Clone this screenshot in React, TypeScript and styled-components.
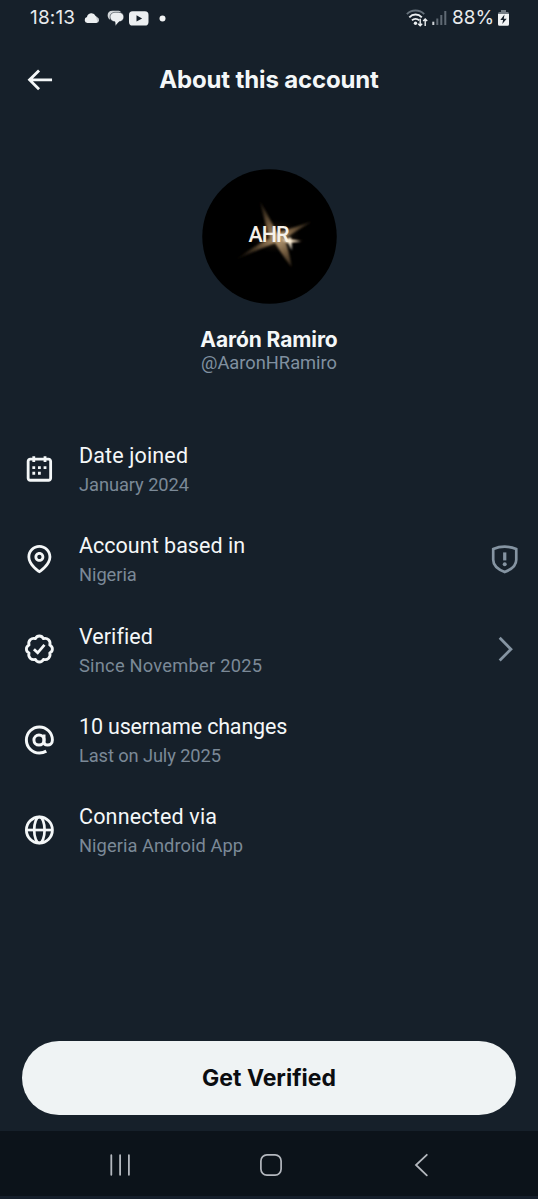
import React from "react";
import styled, { createGlobalStyle } from "styled-components";

const GlobalStyle = createGlobalStyle`
  * { box-sizing: border-box; }
  body { margin: 0; background: #16202a; }
`;

const Screen = styled.div`
  display: flex;
  flex-direction: column;
  height: 1199px;
  background: #16202a;
  color: #f4f7f8;
  font-family: Roboto, "Liberation Sans", sans-serif;
`;

const StatusBar = styled.div`
  display: flex;
  justify-content: space-between;
  align-items: center;
  height: 36px;
  padding: 0 29px 0 30px;
`;

const StatusGroup = styled.div`
  display: flex;
  align-items: center;
`;

const StatusText = styled.span<{ $width: number; $tracking: number; $gap?: number }>`
  width: ${(p) => p.$width}px;
  margin-left: ${(p) => p.$gap ?? 0}px;
  font-family: Inter, sans-serif;
  font-size: 19px;
  line-height: 36px;
  letter-spacing: ${(p) => p.$tracking}px;
  white-space: nowrap;
  color: #e8ebed;
`;

const Icon = styled.svg<{ $gap?: number }>`
  display: block;
  flex: none;
  margin-left: ${(p) => p.$gap ?? 0}px;
`;

const Header = styled.header`
  display: grid;
  grid-template-columns: 34px 1fr 34px;
  align-items: center;
  height: 87px;
  padding: 0 22px;
`;

const HeaderTitle = styled.h1`
  margin: 0;
  text-align: center;
  font: 750 24px/30px Inter, sans-serif;
  letter-spacing: -0.15px;
`;

const Profile = styled.section`
  display: flex;
  flex-direction: column;
  align-items: center;
  height: 301px;
  padding-top: 46px;
`;

const Avatar = styled.svg`
  display: block;
  width: 135px;
  height: 135px;
`;

const Name = styled.div`
  margin-top: 22.5px;
  font: 700 21px/26px Inter, sans-serif;
  letter-spacing: -0.1px;
`;

const Handle = styled.div`
  margin-top: -1px;
  font-size: 18.3px;
  line-height: 22px;
  color: #8090a0;
`;

const DetailList = styled.ul`
  flex: 1;
  margin: 0;
  padding: 0;
  list-style: none;
`;

const DetailRow = styled.li`
  display: flex;
  align-items: center;
  height: 90.2px;
  padding: 0 16px 0 22px;
`;

const DetailText = styled.div`
  flex: 1;
  margin-left: 23px;
  padding-top: 2.4px;
  white-space: nowrap;
`;

const DetailTitle = styled.div<{ $tracking: number }>`
  font-size: 21.5px;
  line-height: 30px;
  letter-spacing: ${(p) => p.$tracking}px;
`;

const DetailNote = styled.div<{ $tracking: number }>`
  font-size: 18.3px;
  line-height: 28px;
  letter-spacing: ${(p) => p.$tracking}px;
  color: #7b8997;
`;

const Footer = styled.div`
  padding: 0 22px 16px;
`;

const PrimaryButton = styled.button`
  display: block;
  width: 494px;
  height: 74px;
  border: 0;
  border-radius: 37px;
  background: #eff3f4;
  color: #0b0d10;
  font: 650 23px/74px Inter, sans-serif;
  padding: 0;
`;

const NavBar = styled.nav`
  display: flex;
  align-items: center;
  justify-content: space-between;
  height: 68px;
  padding: 3px 105px 0 108px;
  background: #0c131a;
  border-bottom: 3px solid #161f2b;
`;

const CalendarIcon = () => (
  <path
    fill="currentColor"
    d="M7 4V3h2v1h6V3h2v1h1.5C19.89 4 21 5.12 21 6.5v12c0 1.38-1.11 2.5-2.5 2.5h-13C4.12 21 3 19.88 3 18.5v-12C3 5.12 4.12 4 5.5 4H7zm0 2H5.5c-.27 0-.5.22-.5.5v12c0 .28.23.5.5.5h13c.28 0 .5-.22.5-.5v-12c0-.28-.22-.5-.5-.5H17v1h-2V6H9v1H7V6zm0 6h2v-2H7v2zm0 4h2v-2H7v2zm4-4h2v-2h-2v2zm0 4h2v-2h-2v2zm4-4h2v-2h-2v2z"
  />
);

const PinIcon = () => (
  <path
    fill="currentColor"
    d="M12 7c-1.93 0-3.5 1.57-3.5 3.5S10.07 14 12 14s3.5-1.57 3.5-3.5S13.93 7 12 7zm0 5c-.827 0-1.5-.673-1.5-1.5S11.173 9 12 9s1.5.673 1.5 1.5S12.827 12 12 12zm0-10c-4.687 0-8.5 3.813-8.5 8.5 0 5.967 7.621 11.116 7.945 11.332l.555.37.555-.37c.324-.216 7.945-5.365 7.945-11.332C20.5 5.813 16.687 2 12 2zm0 17.77c-1.665-1.241-6.5-5.196-6.5-9.27C5.5 6.916 8.416 4 12 4s6.5 2.916 6.5 6.5c0 4.073-4.835 8.028-6.5 9.27z"
  />
);

const BadgeIcon = () => (
  <g fill="none" stroke="currentColor" strokeWidth="2" strokeLinejoin="round">
    <path d="M12 2.75c1.25 0 2.3.75 2.85 1.9 1.2-.45 2.55-.25 3.69.81 1.06 1.14 1.26 2.49.81 3.69 1.15.55 1.9 1.6 1.9 2.85s-.75 2.3-1.9 2.85c.45 1.2.25 2.55-.81 3.69-1.14 1.06-2.49 1.26-3.69.81-.55 1.15-1.6 1.9-2.85 1.9s-2.3-.75-2.85-1.9c-1.2.45-2.55.25-3.69-.81-1.06-1.14-1.26-2.49-.81-3.69-1.15-.55-1.9-1.6-1.9-2.85s.75-2.3 1.9-2.85c-.45-1.2-.25-2.55.81-3.69 1.14-1.06 2.49-1.26 3.69-.81.55-1.15 1.6-1.9 2.85-1.9z" />
    <path d="M8.1 12.1l2.7 2.6 4.8-5.6" strokeLinejoin="miter" />
  </g>
);

const AtIcon = () => (
  <g fill="none" stroke="currentColor" strokeWidth="2.1">
    <circle cx="11.7" cy="12" r="3.6" />
    <path d="M15.3 8v5.4c0 1.3 1 2.2 2.6 2.2s3.35-1.1 3.35-3.6A9.25 9.25 0 1 0 12 21.25c1.9 0 3.5-.5 4.9-1.35" />
  </g>
);

const GlobeIcon = () => (
  <g fill="none" stroke="currentColor" strokeWidth="2">
    <circle cx="12" cy="12" r="9.25" />
    <ellipse cx="12" cy="12" rx="3.7" ry="9.25" strokeWidth="1.9" />
    <path d="M2.75 12h18.5" strokeWidth="1.9" />
  </g>
);

const ShieldIcon = () => (
  <g fill="none" stroke="currentColor" strokeWidth="1.9">
    <path d="M12 3.1c2.8 0 5.6.6 8.2 1.7v7.6c0 4.1-3.4 6.9-8.2 8.7-4.8-1.8-8.2-4.6-8.2-8.7V4.8C6.4 3.7 9.2 3.1 12 3.1z" />
    <path d="M12 7.2v5.7" strokeWidth="2.3" />
    <circle cx="12" cy="15.6" r="1.4" fill="currentColor" stroke="none" />
  </g>
);

const ChevronIcon = () => (
  <path fill="none" stroke="currentColor" strokeWidth="2" d="M8.4 3.9l8 8.1-8 8.1" />
);

const details = [
  { title: "Date joined", tt: 0.14, note: "January 2024", nt: -0.07, Glyph: CalendarIcon },
  { title: "Account based in", tt: 0.02, note: "Nigeria", nt: -0.05, Glyph: PinIcon, Trail: ShieldIcon },
  { title: "Verified", tt: 0.06, note: "Since November 2025", nt: 0.23, Glyph: BadgeIcon, Trail: ChevronIcon },
  { title: "10 username changes", tt: -0.18, note: "Last on July 2025", nt: -0.11, Glyph: AtIcon },
  { title: "Connected via", tt: 0.18, note: "Nigeria Android App", nt: 0.05, Glyph: GlobeIcon },
];

export default function App() {
  return (
    <Screen>
      <GlobalStyle />
      <StatusBar>
        <StatusGroup>
          <StatusText $width={54} $tracking={0.15}>18:13</StatusText>
          <Icon width="16" height="12" viewBox="0 0 16 12">
            <path fill="#c9cdd1" d="M9 11V4a3.5 3.5 0 0 1 4.3 1.3A3 3 0 0 1 12.5 11z" />
            <path fill="#eceff1" d="M3.4 11a3 3 0 0 1-.4-5.9A4.5 4.5 0 0 1 11.6 4c.5 1.5 1.2 4 2 5.5L12 11z" />
          </Icon>
          <Icon width="17" height="16" viewBox="0 0 17 16" $gap={7}>
            <path fill="#d3d7da" d="M2.7 9.8C-.8 6.5.2.8 5.5.8h5c1.5 0 2.7.5 3.5 1.3L4 4z" />
            <path
              fill="#eceff1"
              stroke="#16202a"
              strokeWidth="0.5"
              d="M8 2.3h3.6c3 0 5.2 1.9 5.2 4.7 0 2.7-2 4.6-4.8 4.8L8.4 15.9l-.4-4.100C5 11.500 3 9.800 3 7 3 4.200 5.100 2.300 8 2.300z"
            />
          </Icon>
          <Icon width="20" height="15" viewBox="0 0 20 15" $gap={5}>
            <rect x="0" y="0.3" width="19.5" height="14.2" rx="3.6" fill="#eceff1" />
            <path fill="#16202a" d="M7.5 4.3v6.2l5.6-3.1z" />
          </Icon>
          <Icon width="7" height="7" viewBox="0 0 7 7" $gap={10}>
            <circle cx="3.5" cy="3.5" r="3" fill="#f1f3f4" />
          </Icon>
        </StatusGroup>
        <StatusGroup>
          <Icon width="23" height="19" viewBox="0 0 23 19">
            <g fill="none" strokeWidth="1.9">
              <path stroke="#65707a" d="M.9 5.1C5.5.3 13.5.3 18.2 5.1" />
              <path stroke="#eceff1" d="M3.3 8.3c3.5-3.7 9-3.7 12.5 0M6 11.4c2-2.1 5.1-2.1 7.2 0" />
            </g>
            <circle cx="9.5" cy="14.2" r="1.7" fill="#eceff1" />
            <path fill="none" stroke="#eceff1" strokeWidth="1.4" d="M14.2 9.8v7M12.2 14.7l2 2.1 2-2.1M19.2 17v-7M17.2 12.1l2-2.1 2 2.1" />
          </Icon>
          <Icon width="15" height="16" viewBox="0 0 15 16" $gap={3}>
            <path stroke="#cfd3d7" strokeWidth="2" d="M1.3 15v-3.3" />
            <path stroke="#5f6973" strokeWidth="2" d="M5.3 15V8.5M9.3 15V5M13.3 15V1" />
          </Icon>
          <StatusText $width={42} $tracking={0} $gap={5}>88%</StatusText>
          <Icon width="11" height="16" viewBox="0 0 11 16" $gap={4}>
            <path fill="#737c84" d="M3 0h5v2h1.5a1.5 1.5 0 0 1 1.5 1.5V5H0V3.5A1.5 1.5 0 0 1 1.5 2H3z" />
            <path fill="#f1f3f4" d="M0 4h11v10.200a1.500 1.500 0 0 1-1.500 1.500h-8A1.500 1.500 0 0 1 0 14.200z" />
            <path fill="#16202a" d="M6.5 4.6L2.3 10h2.8l-.8 4L8.7 8.7H5.8z" />
          </Icon>
        </StatusGroup>
      </StatusBar>

      <Header>
        <Icon width="34" height="34" viewBox="-0.37 0 24.18 24.18">
          <path fill="currentColor" d="M7.414 13l5.043 5.04-1.414 1.42L3.586 12l7.457-7.46 1.414 1.42L7.414 11H21v2H7.414z" />
        </Icon>
        <HeaderTitle>About this account</HeaderTitle>
      </Header>

      <Profile>
        <Avatar viewBox="0 0 135 135">
          <defs>
            <radialGradient id="flare" gradientUnits="userSpaceOnUse" cx="76" cy="69" r="40">
              <stop offset="0" stopColor="#bfa27a" />
              <stop offset="0.4" stopColor="#715a3e" />
              <stop offset="1" stopColor="#4a3824" stopOpacity="0.3" />
            </radialGradient>
            <radialGradient id="halo">
              <stop offset="0" stopColor="#a07c4e" stopOpacity="0.45" />
              <stop offset="1" stopColor="#3a2815" stopOpacity="0" />
            </radialGradient>
            <filter id="soft" x="-20%" y="-20%" width="140%" height="140%">
              <feGaussianBlur stdDeviation="0.8" />
            </filter>
          </defs>
          <circle cx="67.5" cy="67.5" r="67.25" fill="#000" />
          <ellipse cx="73" cy="67" rx="26" ry="17" fill="url(#halo)" />
          <path
            filter="url(#soft)"
            fill="url(#flare)"
            d="M58 32Q68 50 75 64Q90 59 110 52.5Q94 62 84 69Q92 71 101 72Q92 73 84 74Q88 86 89.500 98Q80 86 73 74Q58 80 35 90Q54 76 68 69Q63 55 58 32Z"
          />
          <text x="46.500" y="72.500" fill="#f5f1ea" fontFamily="Roboto, sans-serif" fontSize="21.500" fontWeight="500" textLength="41">
            AHR
          </text>
          <path filter="url(#soft)" fill="#fff3dc" d="M80 71l7-1.500 1-2 1.500 3.500 9 1.200-9 1 .2 8-3.500-7.500z" />
        </Avatar>
        <Name>Aarón Ramiro</Name>
        <Handle>@AaronHRamiro</Handle>
      </Profile>

      <DetailList>
        {details.map(({ title, tt, note, nt, Glyph, Trail }) => (
          <DetailRow key={title}>
            <Icon width="34" height="34" viewBox="-0.37 -0.1 24.18 24.18">
              <Glyph />
            </Icon>
            <DetailText>
              <DetailTitle $tracking={tt}>{title}</DetailTitle>
              <DetailNote $tracking={nt}>{note}</DetailNote>
            </DetailText>
            {Trail && (
              <Icon width="34" height="34" viewBox="0.1 -0.2 24.18 24.18" color="#8594a2">
                <Trail />
              </Icon>
            )}
          </DetailRow>
        ))}
      </DetailList>

      <Footer>
        <PrimaryButton>Get Verified</PrimaryButton>
      </Footer>

      <NavBar>
        <Icon width="24" height="24" viewBox="0 0 24 24">
          <path stroke="#b4b8be" strokeWidth="1.8" strokeLinecap="round" d="M3.3 2.2v19.6M12.1 2.2v19.6M20.900 2.200v19.600" />
        </Icon>
        <Icon width="24" height="24" viewBox="0 0 24 24">
          <rect x="1.9" y="1.9" width="20.2" height="20.2" rx="6" fill="none" stroke="#b4b8be" strokeWidth="1.7" />
        </Icon>
        <Icon width="24" height="24" viewBox="0 0 24 24">
          <path fill="none" stroke="#b4b8be" strokeWidth="1.8" strokeLinecap="round" d="M17.8 1.800L7 12l10.800 10.300" />
        </Icon>
      </NavBar>
    </Screen>
  );
}
